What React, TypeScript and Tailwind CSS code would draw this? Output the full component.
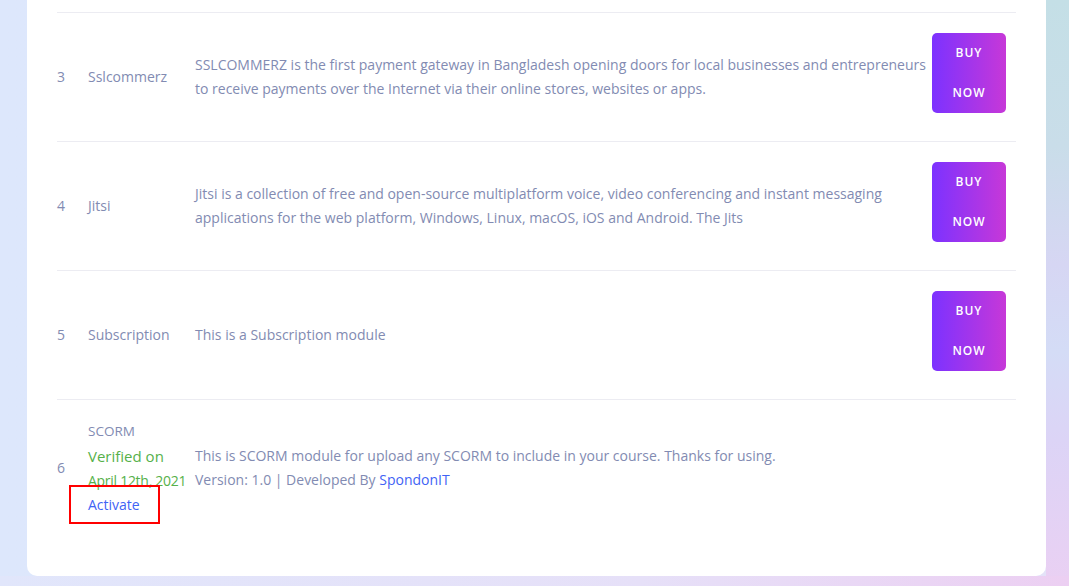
import React from 'react';

interface ModuleRow {
  id: number;
  name: string;
  lines: string[];
  buy?: boolean;
}

const rows: ModuleRow[] = [
  {
    id: 3,
    name: 'Sslcommerz',
    lines: [
      'SSLCOMMERZ is the first payment gateway in Bangladesh opening doors for local businesses and entrepreneurs',
      'to receive payments over the Internet via their online stores, websites or apps.',
    ],
    buy: true,
  },
  {
    id: 4,
    name: 'Jitsi',
    lines: [
      'Jitsi is a collection of free and open-source multiplatform voice, video conferencing and instant messaging',
      'applications for the web platform, Windows, Linux, macOS, iOS and Android. The Jits',
    ],
    buy: true,
  },
  {
    id: 5,
    name: 'Subscription',
    lines: ['This is a Subscription module'],
    buy: true,
  },
];

const BuyButton = () => (
  <button className="w-[74px] h-[80px] rounded-[5px] bg-[linear-gradient(90deg,#7c32ff,#c738d8)] text-white text-[12px] font-semibold tracking-[0.08em] leading-[40px] uppercase px-[18px] mb-[8px]">
    Buy Now
  </button>
);

export default function App() {
  return (
    <div
      className="relative h-[586px] w-[1069px] overflow-hidden bg-[linear-gradient(90deg,#dde7fc_0%,#e0e6fb_60%,#e4e2f8_100%)] text-[#828bb2]"
      style={{ fontFamily: '"Open Sans", "Noto Sans", sans-serif' }}
    >
      {/* right side background shapes */}
      <div className="absolute right-0 top-0 w-[23px] h-[586px] bg-[linear-gradient(180deg,#c4dfe6_0%,#c9dde9_25%,#d6d6f3_45%,#d4dcf6_60%,#dcd4f6_75%,#ead0f3_100%)]" />
      <div className="absolute left-0 bottom-0 w-full h-[10px] bg-[linear-gradient(90deg,#e1e6fb_0%,#e6e0f8_60%,#eccff2_100%)]" />

      <div className="relative ml-[27px] w-[1019px] h-[576px] bg-white rounded-b-[10px] px-[30px] pt-[12px]">
        {rows.map((r) => (
          <div key={r.id} className="flex items-center h-[129px] border-t border-[#ececf2] text-[14px] leading-[24px]">
            <div className="w-[31px] shrink-0">{r.id}</div>
            <div className="w-[107px] shrink-0">{r.name}</div>
            <div className="flex-1 whitespace-nowrap">
              {r.lines.map((l, i) => (
                <div key={i}>{l}</div>
              ))}
            </div>
            <div className="shrink-0 w-[84px] flex items-center">
              {r.buy && <BuyButton />}
            </div>
          </div>
        ))}

        <div className="relative flex items-center border-t border-[#ececf2] text-[14px] leading-[24px] pt-[19px]">
          <div className="w-[31px] shrink-0">6</div>
          <div className="w-[107px] shrink-0">
            <div className="text-[13.5px]">SCORM</div>
            <div className="text-[#56b14a] text-[15px] leading-[25px] mt-[1px]">Verified on</div>
            <div className="text-[#56b14a] text-[14px] whitespace-nowrap tracking-[-0.02em]">April 12th, 2021</div>
            <div className="text-[#3f63f5]">Activate</div>
          </div>
          <div className="flex-1">
            <div>This is SCORM module for upload any SCORM to include in your course. Thanks for using.</div>
            <div>
              Version: 1.0 | Developed By <span className="text-[#3f63f5]">SpondonIT</span>
            </div>
          </div>
          <div className="absolute left-[12px] top-[85px] w-[91px] h-[39px] border-2 border-[#ff0000]" />
        </div>
      </div>
    </div>
  );
}
